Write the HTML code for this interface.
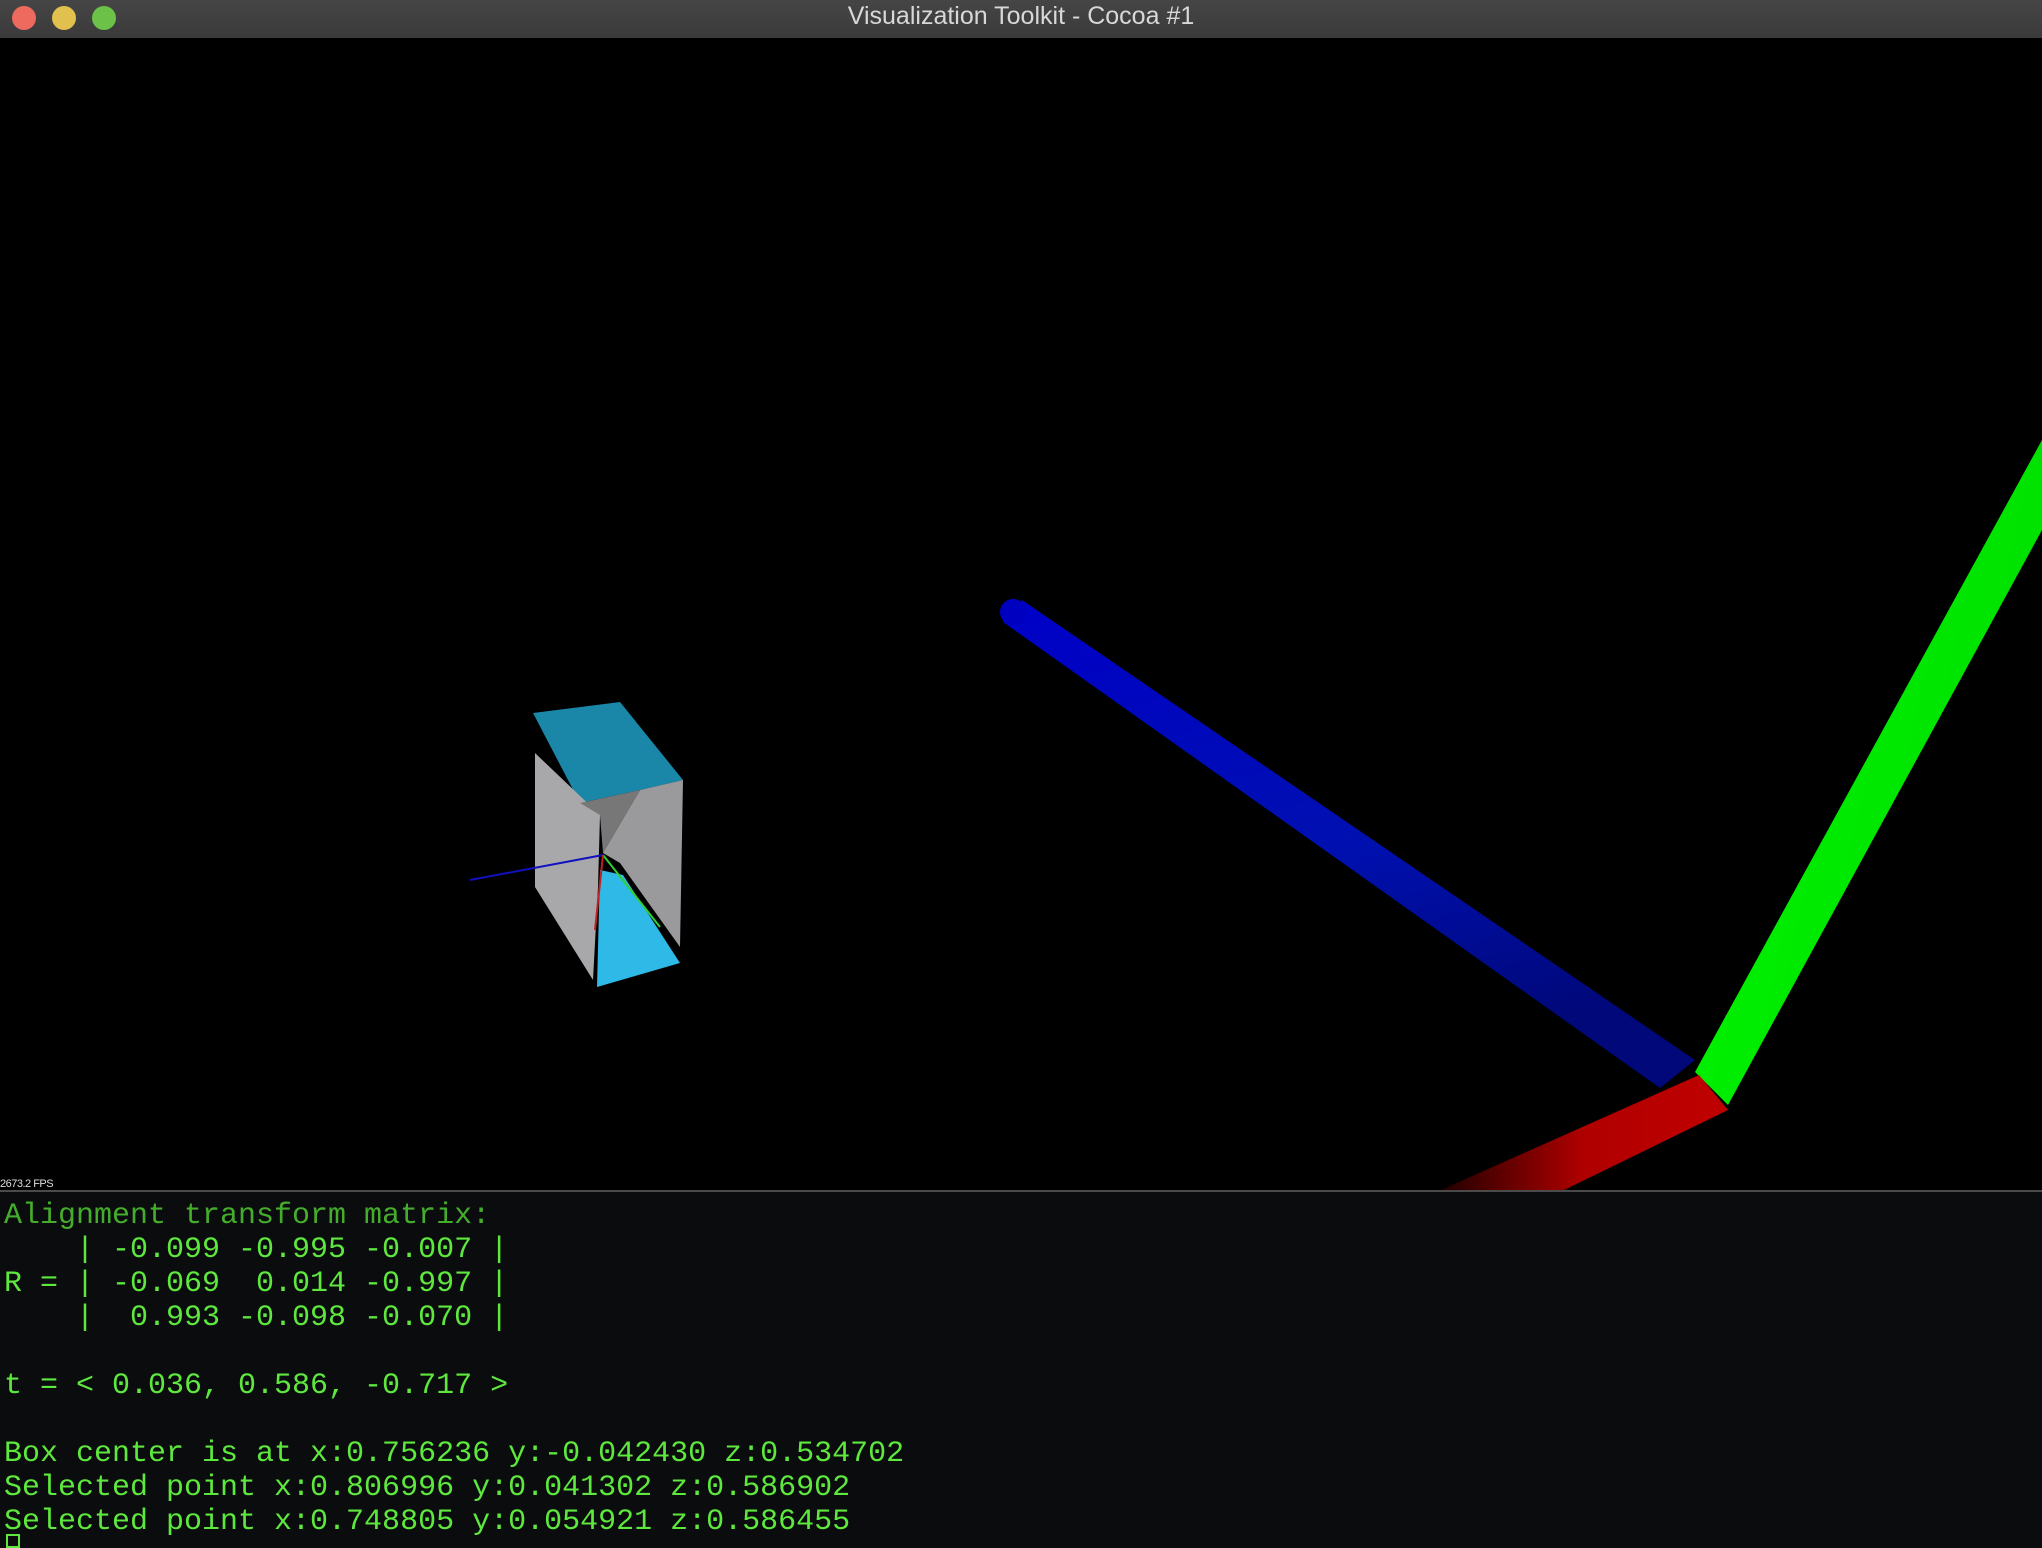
<!DOCTYPE html>
<html><head><meta charset="utf-8"><style>
html,body{margin:0;padding:0;width:2042px;height:1544px;overflow:hidden;background:#0a0c0e;}
.tb{position:absolute;left:0;top:0;width:2042px;height:38px;background:linear-gradient(#464546,#3b3a3b);}
.c{position:absolute;top:6px;width:24px;height:24px;border-radius:50%;}
.title{position:absolute;top:2px;left:0;width:2042px;text-align:center;line-height:38px;color:#d8d8d8;font:25px "Liberation Sans",sans-serif;}
.vp{position:absolute;left:0;top:38px;width:2042px;height:1152px;background:#000;border-bottom:2px solid #4a4a4a;}
.fps{position:absolute;left:0;top:1178px;color:#ddd;font:11px "Liberation Sans",sans-serif;letter-spacing:-0.5px;}
.con{position:absolute;left:4px;top:1199px;font:30px/34px "Liberation Mono",monospace;color:#5ee83e;white-space:pre;}
.cur{position:absolute;left:6px;top:1534px;width:14px;height:14px;border:2px solid #5ee83e;box-sizing:border-box;}
</style></head><body>
<div class="tb">
<div class="c" style="left:12px;background:#ee6a5e"></div>
<div class="c" style="left:52px;background:#e2c04e"></div>
<div class="c" style="left:92px;background:#6cc249"></div>
<div class="title">Visualization Toolkit - Cocoa #1</div>
</div>
<div class="vp">
<svg width="2042" height="1152" viewBox="0 38 2042 1152" style="position:absolute;left:0;top:0">
<defs>
<linearGradient id="bl" x1="0" y1="0" x2="0.3" y2="1"><stop offset="0" stop-color="#0000c8"/><stop offset="0.6" stop-color="#0010b0"/><stop offset="1" stop-color="#00087a"/></linearGradient>
<linearGradient id="gr" x1="0" y1="0" x2="1" y2="0.4"><stop offset="0" stop-color="#00a000"/><stop offset="0.35" stop-color="#00ee00"/><stop offset="1" stop-color="#00e000"/></linearGradient>
<linearGradient id="rd" x1="0" y1="0" x2="1" y2="0"><stop offset="0" stop-color="#200000"/><stop offset="0.5" stop-color="#b00000"/><stop offset="1" stop-color="#c00000"/></linearGradient>
</defs>
<polygon points="1022,600 1003,622 1660,1088 1695,1060" fill="url(#bl)"/>
<circle cx="1013" cy="612" r="13" fill="#0000c0"/>
<polygon points="2042,440 2042,530 1728,1105 1695,1072" fill="url(#gr)"/>
<polygon points="1699,1075 1728,1110 1564,1190 1441,1190" fill="url(#rd)"/>
<polygon points="533,713 620,702 683,780 640,790 580,803" fill="#1a86a8"/>
<polygon points="535,753 600,815 598,887 593,980 535,887" fill="#a8a8aa"/>
<polygon points="600,870 623,875 680,963 597,987" fill="#2fb9e6"/>
<polygon points="640,790 683,780 680,947 620,863 603,853" fill="#9a9a9c"/>
<polygon points="580,803 640,790 603,853 600,815" fill="#777"/>
<line x1="470" y1="880" x2="603" y2="855" stroke="#1010c0" stroke-width="2"/>
<line x1="603" y1="855" x2="660" y2="927" stroke="#30d030" stroke-width="2"/>
<line x1="603" y1="855" x2="595" y2="930" stroke="#c02020" stroke-width="2"/>
</svg>
</div>
<div class="fps">2673.2 FPS</div>
<div class="con"><span style="color:#45ad2c">Alignment transform matrix:</span>
    | -0.099 -0.995 -0.007 |
R = | -0.069  0.014 -0.997 |
    |  0.993 -0.098 -0.070 |

t = &lt; 0.036, 0.586, -0.717 &gt;

Box center is at x:0.756236 y:-0.042430 z:0.534702
Selected point x:0.806996 y:0.041302 z:0.586902
Selected point x:0.748805 y:0.054921 z:0.586455</div>
<div class="cur"></div>
</body></html>
